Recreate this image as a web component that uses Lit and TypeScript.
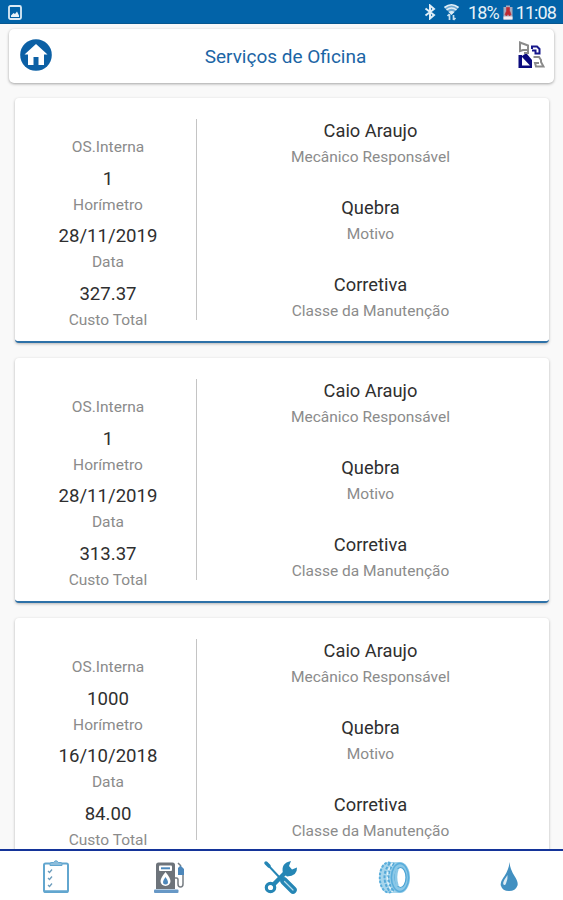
import { LitElement, html, css, svg } from "lit";
import { customElement, property } from "lit/decorators.js";

interface Order {
  meter: string;
  date: string;
  total: string;
  mechanic: string;
  reason: string;
  kind: string;
}

const orders: Order[] = [
  { meter: "1", date: "28/11/2019", total: "327.37", mechanic: "Caio Araujo", reason: "Quebra", kind: "Corretiva" },
  { meter: "1", date: "28/11/2019", total: "313.37", mechanic: "Caio Araujo", reason: "Quebra", kind: "Corretiva" },
  { meter: "1000", date: "16/10/2018", total: "84.00", mechanic: "Caio Araujo", reason: "Quebra", kind: "Corretiva" },
];

@customElement("order-card")
class OrderCard extends LitElement {
  @property({ attribute: false }) order!: Order;

  static styles = css`
    :host {
      display: flex;
      box-sizing: border-box;
      height: 245px;
      flex: none;
      background: #fff;
      border-radius: 4px;
      border-bottom: 2px solid #2d71a8;
      box-shadow: 0 1px 3px rgba(0, 0, 0, 0.28);
      text-align: center;
    }
    .left {
      box-sizing: border-box;
      width: 182px;
      height: 201px;
      margin-top: 21px;
      padding: 16px 0 0 5px;
      border-right: 1.5px solid #c4c4c4;
    }
    .right {
      flex: 1;
      padding: 19px 5px 0 0;
    }
    .value {
      height: 28px;
      line-height: 28px;
      font-size: 18.3px;
      color: #2f2f2f;
    }
    .left .value {
      font-size: 18.6px;
    }
    .label {
      height: 25px;
      line-height: 25px;
      font-size: 15.5px;
      color: #8b8b8b;
    }
    .left .label {
      height: 29.7px;
    }
    .right .label {
      height: 49px;
    }
  `;

  render() {
    const o = this.order;
    return html`
      <div class="left">
        <div class="label">OS.Interna</div>
        <div class="value">${o.meter}</div>
        <div class="label">Horímetro</div>
        <div class="value">${o.date}</div>
        <div class="label">Data</div>
        <div class="value">${o.total}</div>
        <div class="label">Custo Total</div>
      </div>
      <div class="right">
        <div class="value">${o.mechanic}</div>
        <div class="label">Mecânico Responsável</div>
        <div class="value">${o.reason}</div>
        <div class="label">Motivo</div>
        <div class="value">${o.kind}</div>
        <div class="label">Classe da Manutenção</div>
      </div>
    `;
  }
}

const tabs = [
  svg`<g fill="none" stroke="#62a6cf" stroke-width="2">
      <rect x="6" y="4.500" width="24" height="28.500" rx="1.500"/>
      <path d="M6 32.500H30" stroke-width="2.500"/>
      <path d="M12 6.500V4.500Q12 3.500 14 3.500H15.500Q18 0 20.500 3.500H22Q24 3.500 24 4.500V6.500Z" fill="#8dbddb" stroke-width="1"/>
      <path d="M10 12l1.500 1.500L14 10.500M10 19l1.500 1.500L14 17.500M10 26l1.500 1.500L14 24.500" stroke="#6b9cbc" stroke-width="1.300"/></g>`,
  svg`<path fill="#6d737a" d="M5 30V6Q5 3.500 7.500 3.500H21.500Q24 3.500 24 6V30Z"/>
      <rect x="3" y="30.500" width="24.500" height="3.500" rx="1" fill="#6798c6"/>
      <rect x="8" y="6.500" width="13" height="5.500" rx="1" fill="#fff"/>
      <path d="M10 9.300H19" stroke="#4d87ba" stroke-width="2"/>
      <path fill="#fff" d="M14.500 13Q19.500 19 19.500 22A5 5 0 0 1 9.500 22Q9.500 19 14.500 13Z"/>
      <path fill="#4d87ba" d="M14.500 18Q17 21.500 17 23A2.500 2.500 0 0 1 12 23Q12 21.500 14.500 18Z"/>
      <path d="M24 19H25.500Q27 19 27 21V25Q27 28 29.500 28T32 25V13M27 4L30 7" fill="none" stroke="#777d83" stroke-width="1.500"/>
      <path d="M27 9L29.500 6.500 33 10V16H27Z" fill="#4d87ba"/>`,
  svg`<g fill="none" stroke="#2586b5" stroke-linecap="round">
      <circle cx="7.500" cy="28.500" r="4.200" stroke-width="3.200"/>
      <path d="M11 25L24 12" stroke-width="4.500"/>
      <path d="M3 4L18 20" stroke-width="2"/>
      <path d="M3 4L6 7" stroke-width="3.500"/>
      <path d="M21 22L30 31" stroke-width="7.500"/></g>
      <path fill="#2586b5" d="M20 14Q17.500 4 28 2L26 7 29 10.500 34 8.500Q34.500 17 24 17.500Z"/>
      <path d="M21.500 22.500L30 31" stroke="#b6dbea" stroke-width="1.200" stroke-linecap="round"/>`,
  svg`<ellipse cx="12.500" cy="18.500" rx="9.500" ry="15.500" fill="#a6d5ec"/>
      <path d="M12 3H24V34H12Z" fill="#a6d5ec"/>
      <ellipse cx="12.500" cy="18.500" rx="8.700" ry="15" fill="none" stroke="#59addb" stroke-width="2" stroke-dasharray="2.500 1.500"/>
      <path d="M14 4Q3 18 14 33M18 4Q7 18 18 33" fill="none" stroke="#55a9d8" stroke-width="2" stroke-dasharray="3 1.500"/>
      <path d="M16.500 4Q6 18 16.500 33" fill="none" stroke="#e6f5fb" stroke-width="1.300" stroke-dasharray="3 2"/>
      <ellipse cx="24" cy="18.500" rx="10" ry="15.500" fill="#8bc8e7"/>
      <ellipse cx="24" cy="18.500" rx="8.600" ry="14" fill="none" stroke="#59addb" stroke-width="1.500"/>
      <ellipse cx="24.500" cy="18.500" rx="5.500" ry="10" fill="#fff" stroke="#4aa3d4" stroke-width="1.200"/>
      <path d="M21.500 10Q18.500 18 21.500 27" fill="none" stroke="#8bc8e7" stroke-width="2.500"/>`,
  svg`<path fill="#4290c1" d="M20.500 3Q21 10 25.500 17Q29.500 23 28.500 26.500Q26.500 32 20 32T11.800 26.500Q11 23 15.500 17Q20 10 20.500 3Z"/>
      <path fill="#ddecf5" d="M18.500 16Q19 20 17 24.500Q16 27 14.500 25.500Q13.500 24 15.500 20.500Z"/>`,
];

@customElement("app-root")
class AppRoot extends LitElement {
  static styles = css`
    :host {
      display: flex;
      flex-direction: column;
      height: 900px;
      overflow: hidden;
      background: #f9f9f9;
      font-family: Roboto, "Liberation Sans", sans-serif;
    }
    svg {
      display: block;
      flex: none;
    }
    .status {
      box-sizing: border-box;
      height: 24px;
      flex: none;
      display: flex;
      align-items: center;
      padding: 1px 7px 0 8px;
      background: #0263a8;
      border-bottom: 1px solid #075790;
      color: #e6f1f8;
      font-size: 18px;
      letter-spacing: -0.9px;
      white-space: nowrap;
    }
    .status span {
      padding-top: 1px;
    }
    .bluetooth {
      margin-left: auto;
    }
    .wifi {
      margin: 0 8px 0 7px;
    }
    .battery {
      margin: 0 3px 0 4px;
    }
    .bar {
      box-sizing: border-box;
      height: 54px;
      flex: none;
      margin: 5px 9px 0 9px;
      padding: 0 9px 2px 11px;
      display: flex;
      align-items: center;
      justify-content: space-between;
      background: #fff;
      border-radius: 5px;
      box-shadow: 0 1px 3px rgba(0, 0, 0, 0.35);
    }
    .title {
      font-size: 19px;
      color: #1b65a5;
      padding-top: 3px;
      margin-left: 1px;
    }
    .list {
      flex: 1;
      min-height: 0;
      overflow: hidden;
      display: flex;
      flex-direction: column;
      gap: 15px;
      padding: 15px 14px 0 15px;
    }
    .tabs {
      box-sizing: border-box;
      height: 51px;
      flex: none;
      display: grid;
      grid-template-columns: repeat(5, 1fr);
      justify-items: center;
      border-top: 2px solid #143499;
      background: #fff;
      padding-top: 7.5px;
    }
  `;

  render() {
    return html`
      <div class="status">
        <svg width="14" height="15" viewBox="0 0 14 15">
          <rect x="1" y="1" width="12" height="13" rx="1.500" fill="none" stroke="#dcebf5" stroke-width="1.800" />
          <path d="M3 10.500L5.500 8 7 9 9 6.500 11 10.500V12H3Z" fill="#e8f3fa" />
        </svg>
        <svg class="bluetooth" width="12" height="16" viewBox="0 0 12 16">
          <path d="M1.500 4.500L10 11 6 14.500V1.500L10 5 1.500 11.500" fill="none" stroke="#e0eef7" stroke-width="2" />
        </svg>
        <svg class="wifi" width="17" height="18" viewBox="0 0 17 18">
          <path d="M1 4.500Q8.500-1.500 16 4.500L8.500 11.500Z" fill="#6fa9d2" />
          <path d="M1.500 4.500Q8.500-1 15.500 4.500M3.500 7Q8.500 3 13.500 7" fill="none" stroke="#e0eef7" stroke-width="1.600" />
          <path d="M5.500 9Q8.500 7 11.500 9L8.500 12Z" fill="#e0eef7" />
          <path d="M6.500 17V11M4.500 13L6.500 11M10.500 12V17M12.500 15L10.500 17" fill="none" stroke="#c4deef" stroke-width="1.700" />
        </svg>
        <span>18%</span>
        <svg class="battery" width="10" height="15" viewBox="0 0 10 15">
          <path d="M0.500 2H3V0.500H7V2H9.500V14.500H0.500Z" fill="#a9aabd" />
          <path d="M0.500 11.500H9.500V14.500H0.500Z" fill="#f6eef1" />
          <path d="M3.500 2.500H6.500V5.500L8 9.500 6.500 11 5 9 3.500 11 2 9.500 3.500 6Z" fill="#bd2a32" stroke="#bd2a32" stroke-width="0.600" />
        </svg>
        <span>11:08</span>
      </div>
      <div class="bar">
        <svg width="32" height="32" viewBox="0 0 32 32">
          <circle cx="16" cy="16" r="15.800" fill="#0c60a5" />
          <path fill="#fff" d="M16 5L27.500 15.500H24V26H18.500V18H13.500V26H8V15.500H4.500Z" />
        </svg>
        <div class="title">Serviços de Oficina</div>
        <svg width="27" height="28" viewBox="0 0 27 28">
          <path d="M2 10V1.500L10 4.500V9H5ZM10 4V12H6" fill="none" stroke="#8b8b8b" stroke-width="2" />
          <path d="M15.500 16H21L23 19V21L25.500 25.500H18L17 22H21" fill="none" stroke="#8b8b8b" stroke-width="2" />
          <path d="M14 8V5.500H19L21.500 8V12.500H17.500V9.500H14" fill="none" stroke="#17178b" stroke-width="2" />
          <path d="M0.500 14H4V15L7 13H9L14 19V27H0.500Z" fill="#0b0b7d" />
          <path d="M4 16L12 24.500H4Z" fill="#fff" />
        </svg>
      </div>
      <div class="list">${orders.map((o) => html`<order-card .order=${o}></order-card>`)}</div>
      <div class="tabs">
        ${tabs.map((t) => html`<svg width="36" height="36" viewBox="0 0 36 36">${t}</svg>`)}
      </div>
    `;
  }
}
